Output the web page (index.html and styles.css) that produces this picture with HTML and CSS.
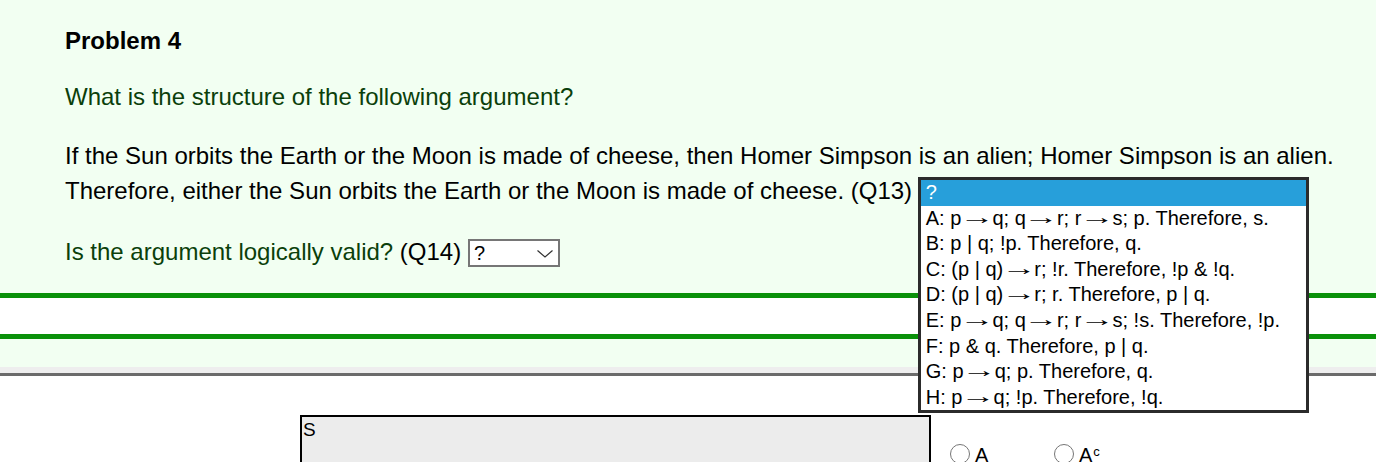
FILE: index.html
```html
<!DOCTYPE html>
<html lang="en">
<head>
<meta charset="utf-8">
<title>Problem 4</title>
<link rel="stylesheet" href="styles.css">
</head>
<body>
  <section class="problem">
    <h2 class="title">Problem 4</h2>
    <p class="prompt first">What is the structure of the following argument?</p>
    <p class="argument">If the Sun orbits the Earth or the Moon is made of cheese, then Homer Simpson is an alien; Homer Simpson is an alien. Therefore, either the Sun orbits the Earth or the Moon is made of cheese. (Q13) <span class="select-wrap"><span class="select">?</span><span class="listbox" role="listbox">
        <span class="option selected">?</span>
        <span class="option">A: p <span class="arr">→</span> q; q <span class="arr">→</span> r; r <span class="arr">→</span> s; p. Therefore, s.</span>
        <span class="option">B: p | q; !p. Therefore, q.</span>
        <span class="option">C: (p | q) <span class="arr">→</span> r; !r. Therefore, !p &amp; !q.</span>
        <span class="option">D: (p | q) <span class="arr">→</span> r; r. Therefore, p | q.</span>
        <span class="option">E: p <span class="arr">→</span> q; q <span class="arr">→</span> r; r <span class="arr">→</span> s; !s. Therefore, !p.</span>
        <span class="option">F: p &amp; q. Therefore, p | q.</span>
        <span class="option">G: p <span class="arr">→</span> q; p. Therefore, q.</span>
        <span class="option">H: p <span class="arr">→</span> q; !p. Therefore, !q.</span>
      </span></span></p>
    <p class="prompt valid">Is the argument logically valid? <span class="q">(Q14)</span> <span class="select small">?<svg class="chev" width="16" height="8" viewBox="0 0 16 8"><path d="M0.5 0.5 L8 7 L15.5 0.5" fill="none" stroke="#333" stroke-width="1.2"/></svg></span></p>
  </section>
  <div class="gap"></div>
  <section class="problem next"></section>
  <div class="divider"></div>
  <div class="venn">
    <div class="venn-box">S</div>
    <label class="radio"><span class="dot"></span><span class="lbl">A</span></label>
    <label class="radio"><span class="dot"></span><span class="lbl">A<sup>c</sup></span></label>
  </div>
</body>
</html>
```

FILE: styles.css
```css
html, body {
  margin: 0;
  padding: 0;
  background: #ffffff;
  font-family: "Liberation Sans", Arial, sans-serif;
  overflow: hidden;
}

.problem {
  background: #f2fff2;
  padding: 23px 30px 24px 65px;
  border-bottom: 5px solid #0a910a;
  font-size: 24px;
  line-height: 35px;
  color: #000;
}

.title {
  margin: 0;
  font-size: 24px;
  line-height: 35px;
  font-weight: bold;
}

.prompt {
  color: #0b3f0b;
  margin: 21px 0 0 0;
}

.prompt.valid {
  margin-top: 26px;
}

.q {
  color: #000;
}

.argument {
  margin: 24px 0 0 0;
}

.select-wrap {
  position: relative;
  display: inline-block;
}

.select {
  display: inline-block;
  box-sizing: border-box;
  height: 28px;
  width: 92px;
  border: 2px solid #767676;
  background: #fff;
  font-size: 20px;
  line-height: 24px;
  padding-left: 4px;
  color: #000;
  position: relative;
  vertical-align: baseline;
}

.chev {
  position: absolute;
  right: 5px;
  top: 9px;
}

.listbox {
  position: absolute;
  left: -1px;
  top: 4px;
  display: block;
  box-sizing: border-box;
  width: 391px;
  border: 3px solid #2b2b2b;
  background: #fff;
  font-size: 20px;
  line-height: 25.6px;
  z-index: 5;
}

.option {
  display: block;
  padding: 0 5px;
  white-space: nowrap;
  color: #000;
}

.option.selected {
  background: #279fda;
  color: #fff;
}

.arr {
  display: inline-block;
  transform: translateY(-1px) scaleX(1.75);
}

.gap {
  height: 36px;
  background: #fff;
}

.problem.next {
  border-bottom: none;
  border-top: 5px solid #0a910a;
  padding: 0;
  height: 28px;
}

.divider {
  height: 6px;
  background: #eeeeee;
  border-bottom: 3px solid #6b6b6b;
}

.venn {
  display: flex;
  align-items: flex-start;
  padding: 39px 0 0 300px;
}

.venn-box {
  box-sizing: border-box;
  width: 631px;
  height: 220px;
  border: 2px solid #000;
  background: #ececec;
  font-size: 19px;
  line-height: 22px;
  padding: 2px 1px;
  color: #000;
}

.radio {
  display: flex;
  align-items: center;
  width: 104px;
  margin-top: 27px;
  font-size: 20px;
  line-height: 22px;
  color: #000;
}

.radio:first-of-type {
  margin-left: 19px;
}

.dot {
  box-sizing: border-box;
  width: 20px;
  height: 20px;
  border: 1.5px solid #767676;
  border-radius: 50%;
  background: #fff;
  margin-right: 5px;
}

.lbl {
  display: inline-block;
  padding-top: 2px;
}

.lbl sup {
  font-size: 13px;
  line-height: 0;
  vertical-align: 6px;
  margin-left: 1px;
}
```
